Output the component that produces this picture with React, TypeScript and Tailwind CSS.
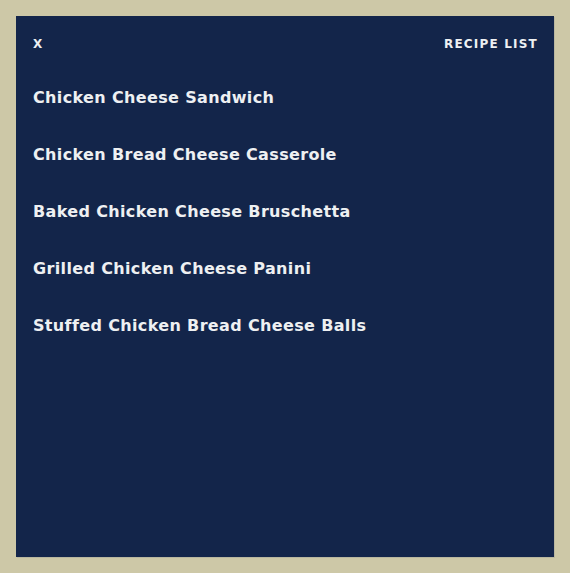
export default function App() {
  const recipes = [
    'Chicken Cheese Sandwich',
    'Chicken Bread Cheese Casserole',
    'Baked Chicken Cheese Bruschetta',
    'Grilled Chicken Cheese Panini',
    'Stuffed Chicken Bread Cheese Balls',
  ]

  return (
    <div className="w-[570px] h-[573px] bg-[#cdc8a7] p-4 font-['DejaVu_Sans',sans-serif]">
      <div className="h-[541px] w-[538px] bg-[#13254a] text-[#eef0f2] px-[17px] pt-[22px] shadow-[1px_1px_0_#b9b7a0]">
        <div className="flex items-center justify-between font-bold">
          <button className="text-[12px] leading-none">X</button>
          <span className="text-[12px] leading-none tracking-[1.2px] mr-[-1px]">RECIPE LIST</span>
        </div>
        <ul className="mt-[38px] flex flex-col gap-[37px]">
          {recipes.map((r) => (
            <li key={r} className="text-[16px] leading-[20px] font-bold tracking-[0.35px]">
              {r}
            </li>
          ))}
        </ul>
      </div>
    </div>
  )
}
